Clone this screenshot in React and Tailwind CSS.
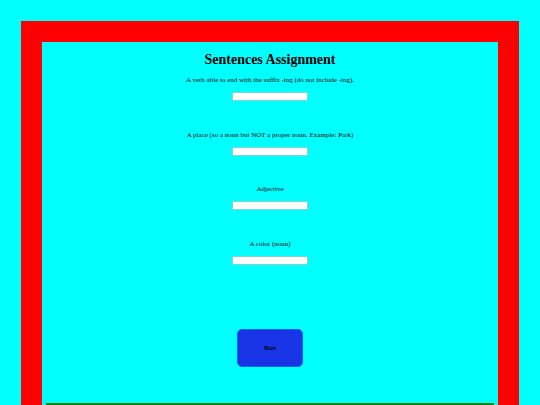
const fields = [
  { id: 'verb', label: 'A verb able to end with the suffix -ing (do not include -ing).' },
  { id: 'place', label: 'A place (so a noun but NOT a proper noun. Example: Park)' },
  { id: 'adjective', label: 'Adjective' },
  { id: 'color', label: 'A color (noun)' },
];

export default function App() {
  return (
    <div className="h-screen overflow-hidden bg-[#00ffff] p-[21px] font-['Liberation_Serif',serif] text-black">
      <main className="flex min-h-screen flex-col items-center border-[21px] border-[#ff0000] px-1 pt-[9px]">
        <h1 className="text-[14px] leading-[18px] font-bold">Sentences Assignment</h1>
        <form className="flex w-full flex-col items-center pt-[7px]" onSubmit={(e) => e.preventDefault()}>
          <div className="grid h-[218px] w-full grid-rows-4">
            {fields.map((field) => (
              <div key={field.id} className="flex flex-col items-center gap-[7px]">
                <label htmlFor={field.id} className="text-[7px] leading-[9px]">
                  {field.label}
                </label>
                <input
                  id={field.id}
                  type="text"
                  className="h-[9px] w-[76px] border border-[#7fd4d4] bg-white px-px text-[6px] outline-none"
                />
              </div>
            ))}
          </div>
          <button
            type="submit"
            className="mt-[35px] h-[38px] w-[66px] rounded-[5px] border border-[#1c62e8] bg-[#1a34e8] font-['Liberation_Sans',sans-serif] text-[6px] font-bold text-black"
          >
            Run
          </button>
        </form>
        <section className="mt-9 h-24 w-full border-[3px] border-[#008000]" />
      </main>
    </div>
  );
}
